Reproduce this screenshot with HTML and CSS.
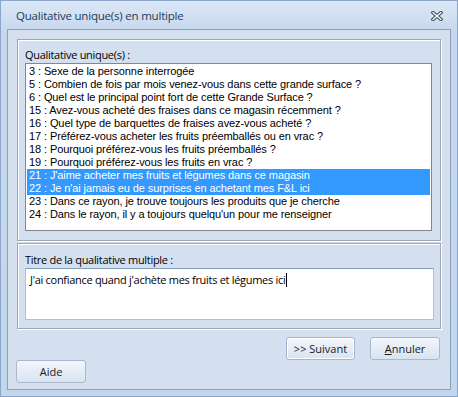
FILE: index.html
```html
<!DOCTYPE html>
<html>
<head>
<meta charset="utf-8">
	<title>Qualitative unique(s) en multiple</title>
	<link rel="stylesheet" href="styles.css">
</head>
<body>
<div class="window">
	<div class="titlebar">
		<span class="title">Qualitative unique(s) en multiple</span>
		<span class="close">
			<svg width="12" height="10" viewBox="0 0 12 10">
				<path d="M2 1.5 L10 8.5 M10 1.5 L2 8.5" stroke="#3b4656" stroke-width="3.4" stroke-linecap="square"/>
				<path d="M2 1.5 L10 8.5 M10 1.5 L2 8.5" stroke="#fff" stroke-width="1.4" stroke-linecap="square"/>
			</svg>
		</span>
	</div>
	<div class="client">
		<div class="group group-list">
			<div class="label">Qualitative unique(s) :</div>
			<ul class="list">
				<li>3 : Sexe de la personne interrogée</li>
				<li>5 : Combien de fois par mois venez-vous dans cette grande surface ?</li>
				<li>6 : Quel est le principal point fort de cette Grande Surface ?</li>
				<li>15 : Avez-vous acheté des fraises dans ce magasin récemment ?</li>
				<li>16 : Quel type de barquettes de fraises avez-vous acheté ?</li>
				<li>17 : Préférez-vous acheter les fruits préemballés ou en vrac ?</li>
				<li>18 : Pourquoi préférez-vous les fruits préemballés ?</li>
				<li>19 : Pourquoi préférez-vous les fruits en vrac ?</li>
				<li class="sel">21 : J'aime acheter mes fruits et légumes dans ce magasin</li>
				<li class="sel">22 : Je n'ai jamais eu de surprises en achetant mes F&amp;L ici</li>
				<li>23 : Dans ce rayon, je trouve toujours les produits que je cherche</li>
				<li>24 : Dans le rayon, il y a toujours quelqu'un pour me renseigner</li>
			</ul>
		</div>
		<div class="group group-title">
			<div class="label">Titre de la qualitative multiple :</div>
			<div class="textbox">J'ai confiance quand j'achète mes fruits et légumes ici<span class="caret"></span></div>
		</div>
		<div class="actions">
			<button class="btn btn-default">&gt;&gt; Suivant</button>
			<button class="btn"><u>A</u>nnuler</button>
		</div>
		<div class="help">
			<button class="btn">Aide</button>
		</div>
	</div>
</div>
</body>
</html>
```
FILE: styles.css
```css
*{
	margin: 0;
	padding: 0;
	box-sizing: border-box;
}
html,body{
	width: 100%;
	height: 100%;
	background: #c4d6ec;
}
.window{
	display: flex;
	flex-direction: column;
	width: 458px;
	height: 397px;
	padding: 0 6px 6px 6px;
	border: 1px solid #8aa6c8;
	background: linear-gradient(#dbe7f6, #c7d8ee 30px, #c4d6ec);
	font-family: "Open Sans", "Noto Sans", sans-serif;
	font-size: 11px;
	color: #000;
}
.titlebar{
	display: flex;
	align-items: center;
	justify-content: space-between;
	height: 28px;
	padding: 1px 8px 0 9px;
}
.title{
	font-size: 11.5px;
	color: #1e395b;
	letter-spacing: -0.2px;
}
.close{
	display: flex;
	margin-top: 1px;
}
.client{
	display: flex;
	flex-direction: column;
	flex: 1;
	padding: 9px 0 0 0;
	border: 1px solid #8aa0bf;
	background: #d4e0f0;
}
.group{
	margin: 0 9px 0 9px;
	border: 1px solid #a2a8b0;
	box-shadow: inset 1px 1px 0 #fff, 1px 1px 0 #fff;
	padding: 7px 8px 0 7px;
}
.group-list{
	height: 202px;
}
.group-title{
	height: 86px;
	margin-top: 2px;
	padding-top: 8px;
}
.label{
	height: 16px;
	line-height: 15px;
	font-size: 11px;
	letter-spacing: -0.3px;
	color: #000;
}
.list{
	list-style: none;
	height: 168px;
	padding: 1px;
	border: 1px solid #828790;
	background: #fff;
	font-family: "Liberation Sans", Arial, sans-serif;
	font-size: 11px;
	letter-spacing: -0.1px;
}
.list li{
	height: 13px;
	line-height: 13px;
	padding-left: 2px;
	white-space: nowrap;
	overflow: hidden;
}
.list .sel{
	background: #3399ff;
	color: #fff;
}
.textbox{
	height: 52px;
	margin-right: -2px;
	padding: 3px 4px;
	border: 1px solid #abc1dc;
	border-top-color: #7f9db9;
	background: #fff;
	font-size: 11px;
	letter-spacing: -0.3px;
	line-height: 16px;
}
.caret{
	display: inline-block;
	width: 1px;
	height: 14px;
	margin-left: 1px;
	vertical-align: -3px;
	background: #000;
}
.actions{
	display: flex;
	justify-content: flex-end;
	gap: 15px;
	margin: 8px 10px 0 0;
}
.help{
	display: flex;
	margin: 0 0 0 8px;
}
.btn{
	width: 70px;
	height: 23px;
	border: 1px solid #a9b8cc;
	border-radius: 3px;
	background: linear-gradient(#f3f7fc, #e4ecf6 50%, #d9e4f1);
	font-family: "Open Sans", "Noto Sans", sans-serif;
	font-size: 11px;
	color: #1a1a1a;
}
.btn-default{
	width: 69px;
	border-color: #a0b6d3;
	box-shadow: inset 0 0 0 1px #fff;
}
```
